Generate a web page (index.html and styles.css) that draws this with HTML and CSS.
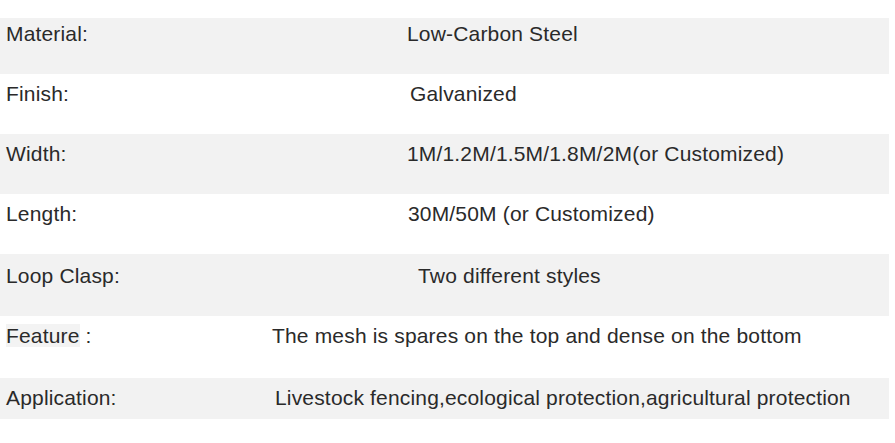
FILE: index.html
```html
<!DOCTYPE html>
<html>
<head>
<meta charset="utf-8">
<link rel="stylesheet" href="styles.css">
</head>
<body>
<div class="spec">
  <div class="row grey first"><div class="label">Material:</div><div class="value">Low-Carbon Steel</div></div>
  <div class="row"><div class="label">Finish:</div><div class="value shift-3">Galvanized</div></div>
  <div class="row grey"><div class="label">Width:</div><div class="value">1M/1.2M/1.5M/1.8M/2M(or Customized)</div></div>
  <div class="row"><div class="label">Length:</div><div class="value shift-1">30M/50M (or Customized)</div></div>
  <div class="row grey tall loop"><div class="label">Loop Clasp:</div><div class="value shift-11">Two different styles</div></div>
  <div class="row tall"><div class="label"><span class="hl">Feature</span> :</div><div class="value wide">The mesh is spares on the top and dense on the bottom</div></div>
  <div class="row grey last"><div class="label">Application:</div><div class="value wide shift-wide">Livestock fencing,ecological protection,agricultural protection</div></div>
</div>
</body>
</html>
```

FILE: styles.css
```css
* { box-sizing: border-box; }
html, body { margin: 0; padding: 0; background: #ffffff; }
body {
  font-family: "Liberation Sans", Arial, sans-serif;
  font-size: 21px;
  line-height: 24px;
  letter-spacing: 0.17px;
  color: #2a2a2a;
}
.spec {
  padding-top: 18px;
  width: 889px;
}
.row {
  display: flex;
  height: 60px;
  padding-top: 8px;
}
.row.grey { background: #f2f2f2; }
.row.first { height: 56px; padding-top: 4px; }
.row.tall { height: 62px; }
.row.loop { padding-top: 10px; }
.row.last { height: 41px; }
.label {
  width: 407px;
  flex: none;
  padding-left: 6px;
  white-space: nowrap;
}
.value { white-space: nowrap; }
.shift-1 { padding-left: 1px; }
.shift-3 { padding-left: 3px; }
.shift-11 { padding-left: 11px; }
.row .label:has(+ .wide) { width: 272px; }
.shift-wide { padding-left: 3px; }
.hl { background: #f3f3f3; }
```
